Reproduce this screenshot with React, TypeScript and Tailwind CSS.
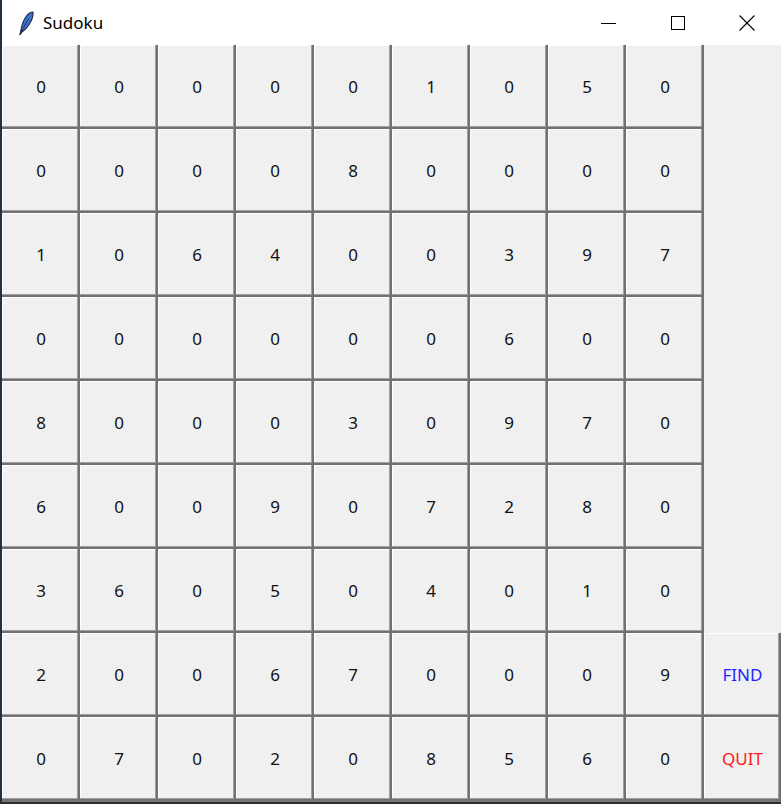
import React from "react";

const board: number[][] = [
  [0, 0, 0, 0, 0, 1, 0, 5, 0],
  [0, 0, 0, 0, 8, 0, 0, 0, 0],
  [1, 0, 6, 4, 0, 0, 3, 9, 7],
  [0, 0, 0, 0, 0, 0, 6, 0, 0],
  [8, 0, 0, 0, 3, 0, 9, 7, 0],
  [6, 0, 0, 9, 0, 7, 2, 8, 0],
  [3, 6, 0, 5, 0, 4, 0, 1, 0],
  [2, 0, 0, 6, 7, 0, 0, 0, 9],
  [0, 7, 0, 2, 0, 8, 5, 6, 0],
];

const btn =
  "flex items-center justify-center bg-[#f0f0f0] text-[17px] shadow-[inset_-2px_-2px_0_#717171,inset_-3px_-3px_0_#a0a0a0,inset_1px_1px_0_#ffffff]";

function Feather() {
  return (
    <svg width="16" height="24" viewBox="0 0 16 24">
      <path
        d="M2.5 22.5 C3 17 4.5 10 8.5 5 C10.5 2.5 13.5 1 15 1 C15.3 4 14 9 11.5 13 C9 17 6.5 19.5 4 21 Z"
        fill="#3f72cc"
        stroke="#1a2742"
        strokeWidth="1.1"
      />
      <path d="M3 21.5 L10.5 7.5" stroke="#1a2742" strokeWidth="0.8" />
      <path d="M2 23.5 L3.6 19.5" stroke="#1a2742" strokeWidth="1.5" strokeLinecap="round" />
    </svg>
  );
}

export default function App() {
  return (
    <div
      className="flex h-[804px] w-[781px] overflow-hidden bg-[#f0f0f0]"
      style={{ fontFamily: '"Noto Sans", "Open Sans", sans-serif' }}
    >
      <div className="w-[2px] bg-[#23303d]" />
      <div className="flex flex-1 flex-col">
        <div className="flex h-[45px] items-center bg-white">
          <div className="ml-[16px] flex w-[16px] items-center">
            <Feather />
          </div>
          <span className="ml-[9px] text-[17px] text-black">Sudoku</span>
          <div className="ml-auto flex h-full">
            <div className="flex w-[69px] items-center justify-center">
              <div className="mt-[1px] h-[1px] w-[15px] bg-black" />
            </div>
            <div className="flex w-[69px] items-center justify-center">
              <div className="h-[14px] w-[14px] border border-black" />
            </div>
            <div className="flex w-[69px] items-center justify-center">
              <svg width="16" height="16" viewBox="0 0 16 16">
                <path d="M0.5 0.5 L15.5 15.5 M15.5 0.5 L0.5 15.5" stroke="#000" strokeWidth="1.1" />
              </svg>
            </div>
          </div>
        </div>
        <div className="grid grid-cols-[repeat(9,78px)_77px] grid-rows-[repeat(9,84px)]">
          {board.map((row, r) => (
            <React.Fragment key={r}>
              {row.map((v, c) => (
                <div key={c} className={`${btn} text-[#111]`}>
                  {v}
                </div>
              ))}
              {r === 7 ? (
                <div className={`${btn} text-[#1f1fff]`}>FIND</div>
              ) : r === 8 ? (
                <div className={`${btn} text-[#ff1a1a]`}>QUIT</div>
              ) : (
                <div className="bg-[#f0f0f0]" />
              )}
            </React.Fragment>
          ))}
        </div>
        <div className="h-[1px] bg-[#7a7a7a]" />
        <div className="flex-1 bg-[#2e2e2e]" />
      </div>
    </div>
  );
}
